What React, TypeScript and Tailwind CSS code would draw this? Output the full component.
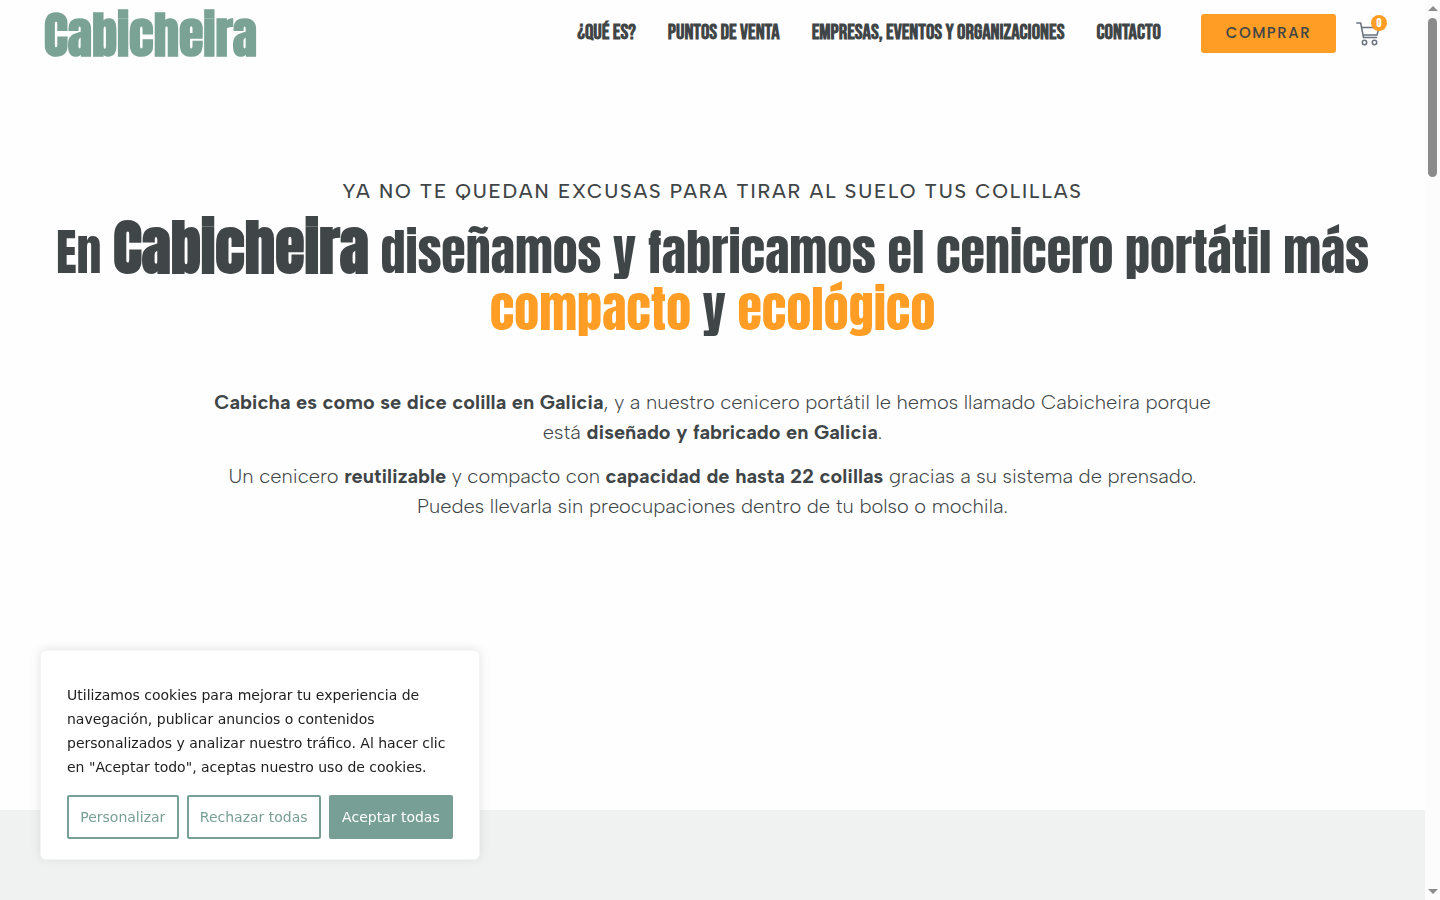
const navLinks = ['¿QUÉ ES?', 'PUNTOS DE VENTA', 'EMPRESAS, EVENTOS Y ORGANIZACIONES', 'CONTACTO'];

function CartIcon() {
    return (
        <svg viewBox="0 0 24 24" className="h-6 w-6" fill="none" stroke="#69727d" strokeWidth="1.5" aria-hidden="true">
            <path d="M0.8 1h3.9l2.8 14.5h13M5.6 5.5H23l-2 7.5H7.2" strokeLinecap="round" strokeLinejoin="round" />
            <circle cx="8.5" cy="20.5" r="2.2" />
            <circle cx="18.5" cy="20.5" r="2.2" />
        </svg>
    );
}

function Header() {
    return (
        <header className="flex h-[67px] items-center justify-between pr-[23px] pl-11">
            <a href="#" className="font-[Anton,'Roboto_Condensed',sans-serif] pt-[2px] text-[50px] leading-[60px] font-bold text-[#7aa395]">
                Cabicheira
            </a>
            <div className="flex items-center">
                <nav className="flex gap-8 pb-[2px] font-['Bebas_Neue','Roboto_Condensed',sans-serif] text-[21px] leading-5 font-bold text-[#404547]">
                    {navLinks.map((label) => (
                        <a key={label} href="#" className="whitespace-nowrap">
                            {label}
                        </a>
                    ))}
                </nav>
                <button className="ml-10 h-[39px] w-[135px] rounded-[3px] bg-[#ff9d25] pb-px font-[Poppins,sans-serif] text-[15px] font-medium tracking-widest text-[#404547]">
                    COMPRAR
                </button>
                <button aria-label="Carrito" className="relative ml-5 pr-[22px]">
                    <CartIcon />
                    <span className="absolute -top-[7px] left-[15px] flex h-4 w-4 items-center justify-center rounded-full bg-[#ff9d25] font-[Anton,sans-serif] text-[10px] leading-4 text-white">
                        0
                    </span>
                </button>
            </div>
        </header>
    );
}

function Hero() {
    return (
        <section className="flex min-h-[743px] flex-col items-center px-10 pt-[109px] text-center text-[#404547]">
            <p className="font-['Albert_Sans',Lato,sans-serif] text-xl leading-[30px] font-medium tracking-[0.09em]">
                YA NO TE QUEDAN EXCUSAS PARA TIRAR AL SUELO TUS COLILLAS
            </p>
            <h1 className="mt-[17px] font-[Anton,'Roboto_Condensed',sans-serif] text-[50px] leading-[57px]">
                En <b className="text-[60px] leading-[50px] font-black">Cabicheira</b> diseñamos y fabricamos el cenicero portátil más{' '}
                <span className="text-[#ff9d25]">compacto</span> y <span className="text-[#ff9d25]">ecológico</span>
            </h1>
            <div className="mt-[50px] max-w-[1010px] space-y-[14px] font-['Albert_Sans',Lato,sans-serif] text-xl leading-[30px] font-light">
                <p>
                    <b className="font-bold">Cabicha es como se dice colilla en Galicia</b>, y a nuestro cenicero portátil le hemos
                    llamado Cabicheira porque está <b className="font-bold">diseñado y fabricado en Galicia</b>.
                </p>
                <p>
                    Un cenicero <b className="font-bold">reutilizable</b> y compacto con{' '}
                    <b className="font-bold">capacidad de hasta 22 colillas</b> gracias a su sistema de prensado. Puedes llevarla
                    sin preocupaciones dentro de tu bolso o mochila.
                </p>
            </div>
        </section>
    );
}

function CookieBanner() {
    return (
        <aside className="fixed bottom-10 left-10 w-[440px] rounded-md border border-[#f4f4f4] bg-white px-[26px] pt-8 pb-5 font-['DejaVu_Sans',sans-serif] text-sm text-[#212121] shadow-[0_-1px_10px_0_#acabab4d]">
            <p className="leading-6">
                Utilizamos cookies para mejorar tu experiencia de navegación, publicar anuncios o contenidos personalizados y
                analizar nuestro tráfico. Al hacer clic en "Aceptar todo", aceptas nuestro uso de cookies.
            </p>
            <div className="mt-4 flex gap-2">
                <button className="h-11 flex-auto rounded-[2px] border-2 border-[#789f95] text-[#789f95]">Personalizar</button>
                <button className="h-11 flex-auto rounded-[2px] border-2 border-[#789f95] text-[#789f95]">Rechazar todas</button>
                <button className="h-11 flex-auto rounded-[2px] border-2 border-[#789f95] bg-[#789f95] text-white">
                    Aceptar todas
                </button>
            </div>
        </aside>
    );
}

function ScrollTrack() {
    return (
        <div aria-hidden="true" className="flex h-screen w-[15px] shrink-0 flex-col items-center bg-[#fcfcfc] py-[6px]">
            <div className="border-x-[5px] border-b-[5px] border-x-transparent border-b-[#8b8b8b]" />
            <div className="mt-[7px] h-[159px] w-[9px] rounded-full bg-[#8b8b8b]" />
            <div className="mt-auto border-x-[5px] border-t-[5px] border-x-transparent border-t-[#8b8b8b]" />
        </div>
    );
}

export default function App() {
    return (
        <div className="flex h-screen overflow-hidden bg-white">
            <main className="min-w-0 flex-1 bg-[#fefefe]">
                <Header />
                <Hero />
                <section className="h-[400px] bg-[#f0f1f1]" />
            </main>
            <ScrollTrack />
            <CookieBanner />
        </div>
    );
}
